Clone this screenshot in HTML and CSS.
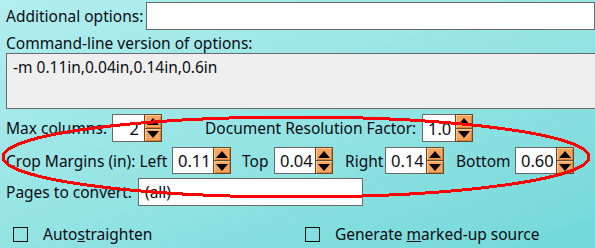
FILE: index.html
```html
<!DOCTYPE html>
<html lang="en">
<head>
  <meta charset="UTF-8">
  <title>Conversion Options</title>
  <link rel="stylesheet" href="styles.css">
</head>
<body>
  <div class="panel">
    <div class="row row-additional">
      <label class="label label-additional">Additional options:</label>
      <input class="text-input input-additional" type="text" value="">
    </div>

    <div class="label label-cmd">Command-line version of options:</div>
    <div class="cmd-box">-m 0.11in,0.04in,0.14in,0.6in</div>

    <div class="row row-columns">
      <label class="label label-max">Max columns:</label>
      <div class="spin spin-narrow">
        <div class="spin-value align-right">2</div>
        <div class="spin-buttons">
          <div class="spin-btn"><span class="arrow-up"></span></div>
          <div class="spin-btn"><span class="arrow-down"></span></div>
        </div>
      </div>
      <label class="label label-resolution">Document Resolution Factor:</label>
      <div class="spin spin-res">
        <div class="spin-value">1.0</div>
        <div class="spin-buttons">
          <div class="spin-btn"><span class="arrow-up"></span></div>
          <div class="spin-btn"><span class="arrow-down"></span></div>
        </div>
      </div>
    </div>

    <div class="row row-margins">
      <label class="label label-crop">Crop Margins (in): Left</label>
      <div class="spin">
        <div class="spin-value">0.11</div>
        <div class="spin-buttons">
          <div class="spin-btn"><span class="arrow-up"></span></div>
          <div class="spin-btn"><span class="arrow-down"></span></div>
        </div>
      </div>
      <label class="label label-top">Top</label>
      <div class="spin">
        <div class="spin-value">0.04</div>
        <div class="spin-buttons">
          <div class="spin-btn"><span class="arrow-up"></span></div>
          <div class="spin-btn"><span class="arrow-down"></span></div>
        </div>
      </div>
      <label class="label label-right">Right</label>
      <div class="spin">
        <div class="spin-value">0.14</div>
        <div class="spin-buttons">
          <div class="spin-btn"><span class="arrow-up"></span></div>
          <div class="spin-btn"><span class="arrow-down"></span></div>
        </div>
      </div>
      <label class="label label-bottom">Bottom</label>
      <div class="spin">
        <div class="spin-value">0.60</div>
        <div class="spin-buttons">
          <div class="spin-btn"><span class="arrow-up"></span></div>
          <div class="spin-btn"><span class="arrow-down"></span></div>
        </div>
      </div>
    </div>

    <div class="row row-pages">
      <label class="label label-pages">Pages to convert:</label>
      <div class="text-input input-pages">(all)</div>
    </div>

    <div class="row row-checks">
      <label class="check check-first"><span class="box"></span><span>Auto<u>s</u>traighten</span></label>
      <label class="check check-second"><span class="box"></span><span>Generate <u>m</u>arked-up source</span></label>
    </div>
  </div>

  <svg class="circle-mark" width="595" height="248" viewBox="0 0 595 248">
    <ellipse cx="296" cy="157" rx="293" ry="40" fill="none" stroke="#ff0000" stroke-width="3" shape-rendering="crispEdges"/>
  </svg>
</body>
</html>
```

FILE: styles.css
```css
html, body {
  margin: 0;
  padding: 0;
  width: 595px;
  height: 248px;
  overflow: hidden;
}

body {
  position: relative;
  font-family: "Noto Sans", "Open Sans", sans-serif;
  font-size: 15.5px;
  color: #0c0c14;
  background: linear-gradient(160deg, #b2eeee 0%, #92e3e3 55%, #72d8d8 100%);
}

.panel {
  padding: 2px 0 0 6px;
}

.row {
  display: flex;
  align-items: center;
}

.label {
  white-space: nowrap;
  line-height: 20px;
}

/* additional options */
.row-additional {
  height: 28px;
}

.label-additional {
  width: 143px;
}

.text-input {
  box-sizing: border-box;
  height: 28px;
  border: 1px solid #6a6a6a;
  background: #fff;
  font: inherit;
  padding: 0 6px;
  line-height: 26px;
}

.input-additional {
  width: 460px;
}

/* command line */
.label-cmd {
  margin-top: 3px;
  height: 20px;
}

.cmd-box {
  box-sizing: border-box;
  height: 56px;
  width: 600px;
  border: 1px solid #6a6a6a;
  background: #efefef;
  padding: 3px 6px;
  line-height: 20px;
}

/* spinners */
.row-columns {
  margin-top: 5px;
  height: 28px;
}

.row-margins {
  margin-top: 5px;
  height: 27px;
}

.label-max {
  width: 106px;
}

.label-resolution {
  margin-left: 43px;
  width: 217px;
}

.label-crop {
  width: 166px;
}

.label-top {
  margin-left: 11px;
  width: 32px;
}

.label-right {
  margin-left: 12px;
  width: 40px;
}

.label-bottom {
  margin-left: 12px;
  width: 59px;
}

.spin {
  display: flex;
  height: 100%;
}

.spin-value {
  box-sizing: border-box;
  width: 41px;
  height: 100%;
  border: 1px solid #6a6a6a;
  border-right: none;
  background: #fff;
  padding: 0 5px;
  font-size: 16.5px;
  display: flex;
  align-items: center;
}

.spin-narrow .spin-value {
  width: 32px;
}

.spin-res .spin-value {
  width: 33px;
}

.align-right {
  justify-content: flex-end;
}

.spin-buttons {
  box-sizing: border-box;
  width: 18px;
  height: 100%;
  display: flex;
  flex-direction: column;
  border: 1px solid #6b4822;
  background: #6b4822;
  gap: 1px;
}

.spin-btn {
  flex: 1;
  background: #f6a45e;
  box-shadow: inset 1px 1px 0 #fcc894, inset -1px -1px 0 #d9823c;
  display: flex;
  align-items: center;
  justify-content: center;
}

.arrow-up {
  width: 0;
  height: 0;
  border-left: 6px solid transparent;
  border-right: 6px solid transparent;
  border-bottom: 7px solid #000;
}

.arrow-down {
  width: 0;
  height: 0;
  border-left: 6px solid transparent;
  border-right: 6px solid transparent;
  border-top: 7px solid #000;
}

/* pages */
.row-pages {
  margin-top: 4px;
  height: 28px;
}

.label-pages {
  width: 132px;
}

.input-pages {
  width: 225px;
}

/* checkboxes */
.row-checks {
  margin-top: 21px;
  height: 14px;
}

.check {
  display: flex;
  align-items: center;
  white-space: nowrap;
}

.check-first {
  margin-left: 7px;
  width: 292px;
}

.box {
  box-sizing: border-box;
  width: 15px;
  height: 15px;
  border: 1px solid #111;
  margin-right: 15px;
}

.circle-mark {
  position: absolute;
  left: 0;
  top: 0;
  pointer-events: none;
}
```
